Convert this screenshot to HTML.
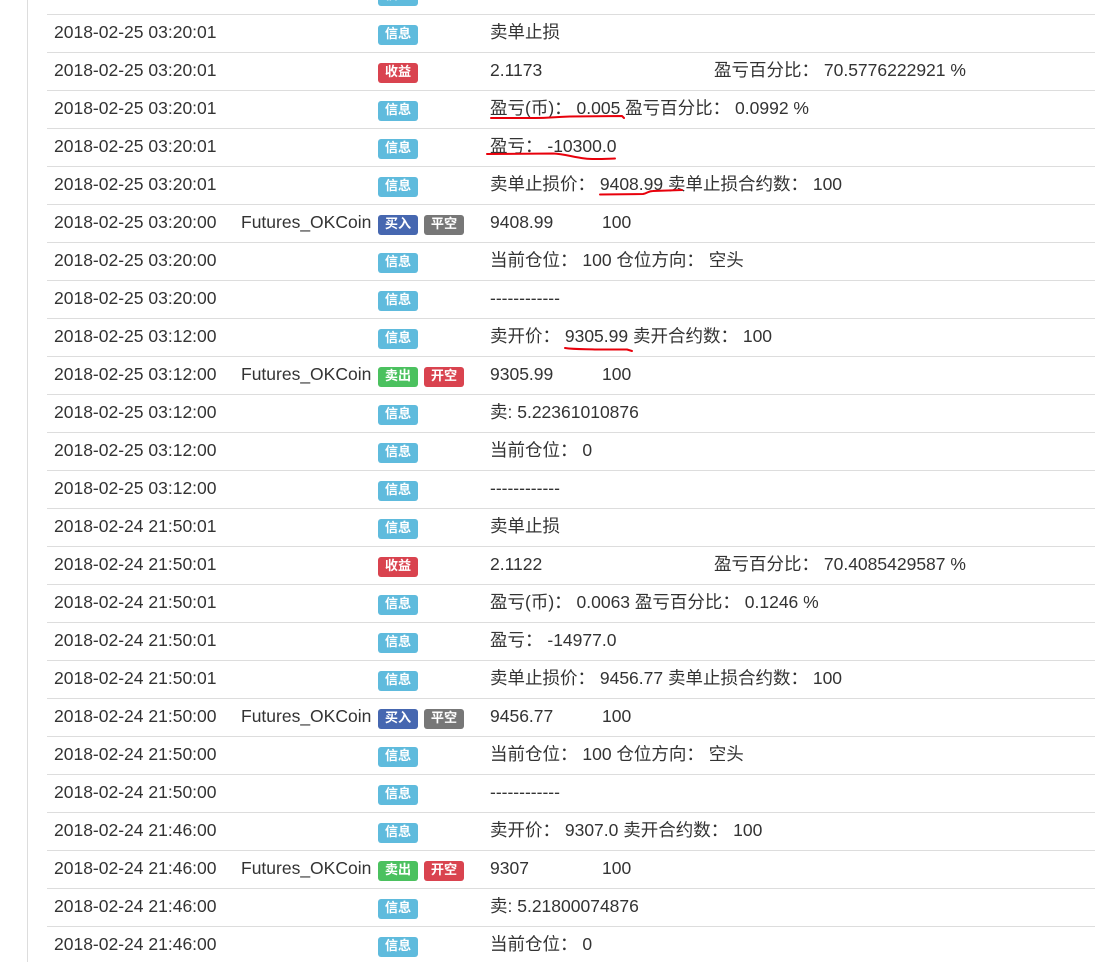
<!DOCTYPE html>
<html lang="zh"><head><meta charset="utf-8"><title>日志</title>
<style>
html,body{margin:0;padding:0;background:#fff;width:1095px;height:962px;overflow:hidden}
body{position:relative;font:17.5px/25px "Liberation Sans","WenQuanYi Zen Hei","Noto Sans CJK SC",sans-serif;color:#333}
.v{position:absolute;left:27px;top:0;width:1px;height:962px;background:#ddd}
.r{position:absolute;left:47px;width:1048px;height:38px;border-top:1px solid #ddd;box-sizing:border-box}
.r>*{position:absolute;white-space:pre;top:5px}
.t{left:7px}.n{left:194px}.c{left:443px}.d{left:555px}.e{left:667px}
.r>.l{top:10px;height:20px;line-height:17px;width:40px;text-align:center;border-radius:3px;color:#fff;font-size:13.125px;font-weight:bold}
.a{left:331px}.b{left:377px}
.i{background:#5fbbdd;width:40px}
.g{background:#4bc15f}.x{background:#d9434f}.u{background:#4667b0}.h{background:#777}
svg{position:absolute;left:0;top:0}
</style></head><body>
<div class="v"></div>
<div class="r" style="top:-24px;border:0"><span class="l a i">信息</span></div>
<div class="r" style="top:14px"><span class="t">2018-02-25 03:20:01</span><span class="l a i">信息</span><span class="c">卖单止损</span></div>
<div class="r" style="top:52px"><span class="t">2018-02-25 03:20:01</span><span class="l a x">收益</span><span class="c">2.1173</span><span class="e">盈亏百分比： 70.5776222921 %</span></div>
<div class="r" style="top:90px"><span class="t">2018-02-25 03:20:01</span><span class="l a i">信息</span><span class="c">盈亏(币)： 0.005 盈亏百分比： 0.0992 %</span></div>
<div class="r" style="top:128px"><span class="t">2018-02-25 03:20:01</span><span class="l a i">信息</span><span class="c">盈亏： -10300.0</span></div>
<div class="r" style="top:166px"><span class="t">2018-02-25 03:20:01</span><span class="l a i">信息</span><span class="c">卖单止损价： 9408.99 卖单止损合约数： 100</span></div>
<div class="r" style="top:204px"><span class="t">2018-02-25 03:20:00</span><span class="n">Futures_OKCoin</span><span class="l a u">买入</span><span class="l b h">平空</span><span class="c">9408.99</span><span class="d">100</span></div>
<div class="r" style="top:242px"><span class="t">2018-02-25 03:20:00</span><span class="l a i">信息</span><span class="c">当前仓位： 100 仓位方向： 空头</span></div>
<div class="r" style="top:280px"><span class="t">2018-02-25 03:20:00</span><span class="l a i">信息</span><span class="c">------------</span></div>
<div class="r" style="top:318px"><span class="t">2018-02-25 03:12:00</span><span class="l a i">信息</span><span class="c">卖开价： 9305.99 卖开合约数： 100</span></div>
<div class="r" style="top:356px"><span class="t">2018-02-25 03:12:00</span><span class="n">Futures_OKCoin</span><span class="l a g">卖出</span><span class="l b x">开空</span><span class="c">9305.99</span><span class="d">100</span></div>
<div class="r" style="top:394px"><span class="t">2018-02-25 03:12:00</span><span class="l a i">信息</span><span class="c">卖: 5.22361010876</span></div>
<div class="r" style="top:432px"><span class="t">2018-02-25 03:12:00</span><span class="l a i">信息</span><span class="c">当前仓位： 0</span></div>
<div class="r" style="top:470px"><span class="t">2018-02-25 03:12:00</span><span class="l a i">信息</span><span class="c">------------</span></div>
<div class="r" style="top:508px"><span class="t">2018-02-24 21:50:01</span><span class="l a i">信息</span><span class="c">卖单止损</span></div>
<div class="r" style="top:546px"><span class="t">2018-02-24 21:50:01</span><span class="l a x">收益</span><span class="c">2.1122</span><span class="e">盈亏百分比： 70.4085429587 %</span></div>
<div class="r" style="top:584px"><span class="t">2018-02-24 21:50:01</span><span class="l a i">信息</span><span class="c">盈亏(币)： 0.0063 盈亏百分比： 0.1246 %</span></div>
<div class="r" style="top:622px"><span class="t">2018-02-24 21:50:01</span><span class="l a i">信息</span><span class="c">盈亏： -14977.0</span></div>
<div class="r" style="top:660px"><span class="t">2018-02-24 21:50:01</span><span class="l a i">信息</span><span class="c">卖单止损价： 9456.77 卖单止损合约数： 100</span></div>
<div class="r" style="top:698px"><span class="t">2018-02-24 21:50:00</span><span class="n">Futures_OKCoin</span><span class="l a u">买入</span><span class="l b h">平空</span><span class="c">9456.77</span><span class="d">100</span></div>
<div class="r" style="top:736px"><span class="t">2018-02-24 21:50:00</span><span class="l a i">信息</span><span class="c">当前仓位： 100 仓位方向： 空头</span></div>
<div class="r" style="top:774px"><span class="t">2018-02-24 21:50:00</span><span class="l a i">信息</span><span class="c">------------</span></div>
<div class="r" style="top:812px"><span class="t">2018-02-24 21:46:00</span><span class="l a i">信息</span><span class="c">卖开价： 9307.0 卖开合约数： 100</span></div>
<div class="r" style="top:850px"><span class="t">2018-02-24 21:46:00</span><span class="n">Futures_OKCoin</span><span class="l a g">卖出</span><span class="l b x">开空</span><span class="c">9307</span><span class="d">100</span></div>
<div class="r" style="top:888px"><span class="t">2018-02-24 21:46:00</span><span class="l a i">信息</span><span class="c">卖: 5.21800074876</span></div>
<div class="r" style="top:926px"><span class="t">2018-02-24 21:46:00</span><span class="l a i">信息</span><span class="c">当前仓位： 0</span></div>
<svg width="1095" height="962" fill="none" stroke="#e8000b" stroke-width="2" stroke-linecap="round" stroke-linejoin="round">
<path d="M491 118L535 118C550 118 552 117 570 116.500L622 116L624 118"/>
<path d="M487 154L553 153.500C565 154 572 157 585 158.500C592 159.500 600 159 615 158.500"/>
<path d="M600 194.500L643 194C648 193 648 191 653 191L682 190"/>
<path d="M565 348C575 349.500 585 349 597 349.500L627 349.500L632 351"/>
</svg>
</body></html>
